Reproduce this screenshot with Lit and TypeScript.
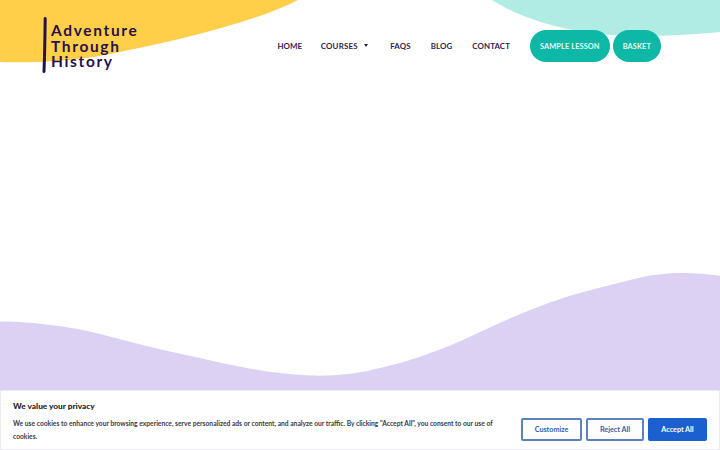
import { LitElement, html, css } from "lit";
import { customElement } from "lit/decorators.js";

@customElement("app-root")
export class AppRoot extends LitElement {
  static styles = css`
    :host { display: block; width: 720px; height: 450px; position: relative; overflow: hidden; background: #fff; font-family: "Lato", "Liberation Sans", sans-serif; }
    .bg { position: absolute; inset: 0; width: 720px; height: 450px; }
    header { position: relative; display: flex; align-items: flex-start; height: 80px; padding: 16px 59px 0 42px; box-sizing: content-box; }
    .logo { display: flex; gap: 5px; height: 57px; }
    .bar { display: block; width: 5px; height: 58px; }
    .logo-text { font-weight: 700; font-size: 15.5px; line-height: 15.5px; letter-spacing: 1.65px; color: #2a0f4d; padding-top: 7px; margin-left: -1px; }
    nav { margin-left: auto; display: flex; align-items: center; height: 32px; margin-top: 14px; }
    nav a { font-weight: 700; font-size: 7.9px; color: #2f2350; letter-spacing: 0.1px; white-space: nowrap; }
    .links { display: flex; align-items: center; }
    .home { margin-right: 18.5px; }
    .courses { margin-right: 22px; display: flex; align-items: center; gap: 6.5px; letter-spacing: 0.2px; }
    .caret { width: 0; height: 0; border-left: 2.5px solid transparent; border-right: 2.5px solid transparent; border-top: 3.5px solid #2a1a4f; margin-top: -2px; }
    .faqs, .blog, .contact { margin-right: 20px; }
    nav a.pill { display: flex; align-items: center; height: 32px; padding: 0 10px; border-radius: 16px; background: #0db9a6; color: #e6f8f4; font-size: 7.4px; }
    .pill + .pill { margin-left: 3px; }
    .banner { position: absolute; left: 0; right: 0; top: 390px; height: 60px; box-sizing: border-box; background: #fff; border: 1px solid #ececf0; display: flex; align-items: flex-start; padding: 0 12px 0 12px; }
    .copy { flex: 1; min-width: 0; padding-top: 10px; }
    h2 { margin: 0; font-size: 8.3px; line-height: 11px; font-weight: 900; color: #1c1c24; }
    p { margin: 5px 0 0; font-size: 6.7px; line-height: 12.5px; font-weight: 700; width: 490px; color: #3a3a44; }
    .actions { display: flex; gap: 4px; margin-top: 27px; }
    button { width: 59px; height: 23px; box-sizing: border-box; border: 2px solid #5b82ba; border-radius: 2px; background: #fff; color: #2b5faf; font: 700 7.2px "Lato", sans-serif; padding: 0; }
    button.wide { width: 61px; }
    button.mid { width: 58px; }
    button.primary { background: #1c5fd0; border-color: #1c5fd0; color: #fff; }
  `;
  render() {
    return html`
      <svg class="bg" viewBox="0 0 720 450">
        <path fill="#ffcf4a" d="M0 0H298C255 22 180 40 110 54C70 62 30 63 0 62Z"/>
        <path fill="#b0ebe4" d="M492 0C520 18 570 36 640 36C670 36 700 34 720 32V0Z"/>
        <path fill="#dcd1f3" d="M0 321.5C25 321 70 326 100 334C130 342 170 352 200 358C235 366 270 374 310 375.5C340 376.5 365 372 380 368C400 363 415 359 430 353C450 346 465 339 480 332C500 323 515 316 530 310C548 303 565 297 580 293C597 288 615 284 630 280C650 275 665 273 680 273C695 273 710 274 720 276V450H0Z"/>
      </svg>
      <header>
        <div class="logo">
          <svg class="bar" viewBox="0 0 5 58"><path d="M3.2 2.5C3 20 2.6 40 2 55.5" fill="none" stroke="#2a0f4d" stroke-width="3" stroke-linecap="round"/></svg>
          <div class="logo-text">Adventure<br>Through<br>History</div>
        </div>
        <nav>
          <div class="links">
            <a class="home">HOME</a>
            <a class="courses">COURSES <span class="caret"></span></a>
            <a class="faqs">FAQS</a>
            <a class="blog">BLOG</a>
            <a class="contact">CONTACT</a>
          </div>
          <a class="pill">SAMPLE LESSON</a>
          <a class="pill">BASKET</a>
        </nav>
      </header>
      <section class="banner">
        <div class="copy">
          <h2>We value your privacy</h2>
          <p>We use cookies to enhance your browsing experience, serve personalized ads or content, and analyze our traffic. By clicking "Accept All", you consent to our use of cookies.</p>
        </div>
        <div class="actions">
          <button class="wide">Customize</button>
          <button class="mid">Reject All</button>
          <button class="primary">Accept All</button>
        </div>
      </section>
    `;
  }
}
